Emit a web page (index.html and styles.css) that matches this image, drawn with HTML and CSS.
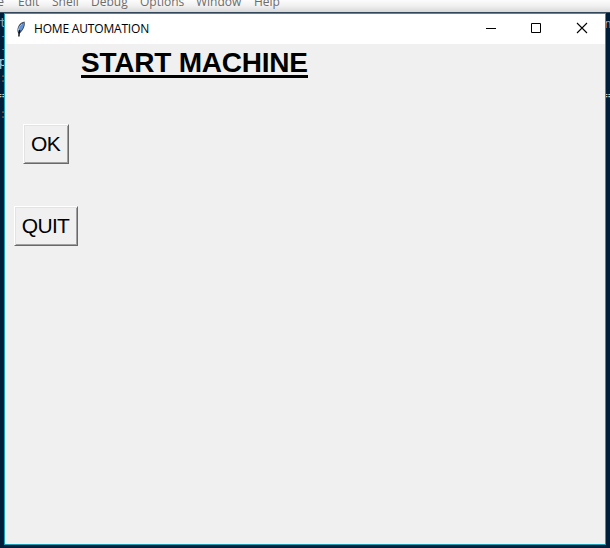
FILE: index.html
```html
<!DOCTYPE html>
<html lang="en">
<head>
<meta charset="utf-8">
<title>HOME AUTOMATION</title>
<link rel="stylesheet" href="styles.css">
</head>
<body>
<div class="desktop">
  <nav class="menubar">
    <span class="m-file">File</span><span class="m-edit">Edit</span><span class="m-shell">Shell</span><span class="m-debug">Debug</span><span class="m-options">Options</span><span class="m-window">Window</span><span>Help</span>
  </nav>
  <div class="code code-left">
    <span class="t1">t</span><span class="t2">-</span><span class="t3">-</span><span class="t4">rp</span><span class="t5">:</span><span class="t6">==</span><span class="t7">:</span>
  </div>
  <div class="code code-right"><span class="r1">n</span><span class="r2">==</span></div>
  <section class="window">
    <header class="titlebar">
      <svg class="feather" width="10" height="16" viewBox="0 0 10 16">
        <path d="M2.3 12.5C.4 8.8 1.7 4 5.7 1.4L8.5.6C9.6 4.2 7.6 9 3.8 12.6Z" fill="#39424f"/>
        <path d="M7 2.2C4.3 4.5 2.6 7 2.3 10.8L3.6 11.2C6.8 8.5 8.2 5 8 1.6Z" fill="#5c94dc"/>
        <path d="M6 2.8C4 4.5 2.7 6.5 2.4 9.5" stroke="#b9d3f3" stroke-width="1" fill="none"/>
        <path d="M3.8 9Q2.9 12 2.9 15.5" stroke="#080c12" stroke-width="1.4" fill="none"/>
      </svg>
      <span class="title">HOME AUTOMATION</span>
      <div class="controls">
        <svg width="46" height="30" viewBox="0 0 46 30"><path d="M18 14.5h10" stroke="#000"/></svg>
        <svg width="45" height="30" viewBox="0 0 45 30"><path d="M17.5 9.5h9v9h-9z" stroke="#000" fill="none"/></svg>
        <svg width="46" height="30" viewBox="0 0 46 30"><path d="M18 9l10 10M28 9l-10 10" stroke="#000" stroke-width="1.1"/></svg>
      </div>
    </header>
    <main class="client">
      <h1 class="heading">START MACHINE</h1>
      <button class="btn ok">OK</button>
      <button class="btn quit">QUIT</button>
    </main>
  </section>
</div>
</body>
</html>
```
FILE: styles.css
```css
* { box-sizing: border-box; }
body { margin: 0; overflow: hidden; }
.desktop {
  position: relative;
  width: 610px;
  height: 548px;
  overflow: hidden;
  background: #001e3a;
}
.menubar {
  display: flex;
  height: 13px;
  background: linear-gradient(#fcfcfc 0, #f0f0f0 6px, #d8d8d8 12px, #34485b 12px);
  color: #6c6c6c;
  font: 12px/16px "Open Sans", "Noto Sans", sans-serif;
  overflow: hidden;
}
.menubar span { margin-top: -6px; white-space: nowrap; flex: none; }
.m-file { width: 18px; margin-left: -15px; margin-right: 15px; }
.m-edit { width: 34px; }
.m-shell { width: 39px; }
.m-debug { width: 49px; }
.m-options { width: 56px; }
.m-window { width: 58px; }
.code {
  position: absolute;
  top: 13px;
  width: 4px;
  height: 120px;
  overflow: hidden;
  font: 13px/13px "DejaVu Sans Mono", monospace;
}
.code span { position: absolute; }
.code-left { left: 0; }
.code-right { left: 606px; }
.t1 { left: -1px; top: 3px; color: #8fa9c0; }
.t2 { left: 0; top: 16px; color: #63839f; }
.t3 { left: 0; top: 29px; color: #63839f; }
.t4 { left: -9px; top: 42px; color: #b4cde2; }
.t5 { left: -1px; top: 58px; color: #9a463c; }
.t6 { left: -6px; top: 75px; color: #d6c8b8; }
.t7 { left: -1px; top: 94px; color: #9a463c; }
.r1 { left: -2px; top: 4px; color: #b9aa9f; }
.r2 { left: -6px; top: 75px; color: #d6c8b8; }
.window {
  position: absolute;
  left: 4px;
  top: 13px;
  width: 602px;
  height: 532px;
  border: 1px solid #18a0b8;
  background: #f0f0f0;
}
.titlebar {
  display: flex;
  height: 30px;
  align-items: center;
  padding-left: 11px;
  background: #fff;
}
.feather { margin-right: 8px; }
.title {
  font: 12px/16px "Open Sans", sans-serif;
  letter-spacing: -.18px;
  color: #000;
  white-space: nowrap;
}
.controls { display: flex; margin-left: auto; }
.client {
  display: flex;
  flex-direction: column;
  align-items: flex-start;
  color: #000;
  font-family: "Liberation Sans", Arial, sans-serif;
}
.heading {
  width: 227px;
  margin: 1px 0 0 76px;
  height: 33px;
  border-bottom: 3px solid #000;
  font-size: 28px;
  line-height: 36px;
  letter-spacing: -.23px;
  white-space: nowrap;
}
.btn {
  height: 40px;
  padding: 0 1px 0 0;
  border: 1px solid;
  border-color: #fff #696969 #696969 #fff;
  box-shadow: inset 1px 1px #e3e3e3, inset -1px -1px #a0a0a0;
  background: #f0f0f0;
  color: #000;
  font: 21px/36px "Liberation Sans", Arial, sans-serif;
  letter-spacing: -.7px;
}
.ok { width: 46px; margin: 46px 0 0 18px; }
.quit { width: 64px; margin: 42px 0 0 9px; }
```
